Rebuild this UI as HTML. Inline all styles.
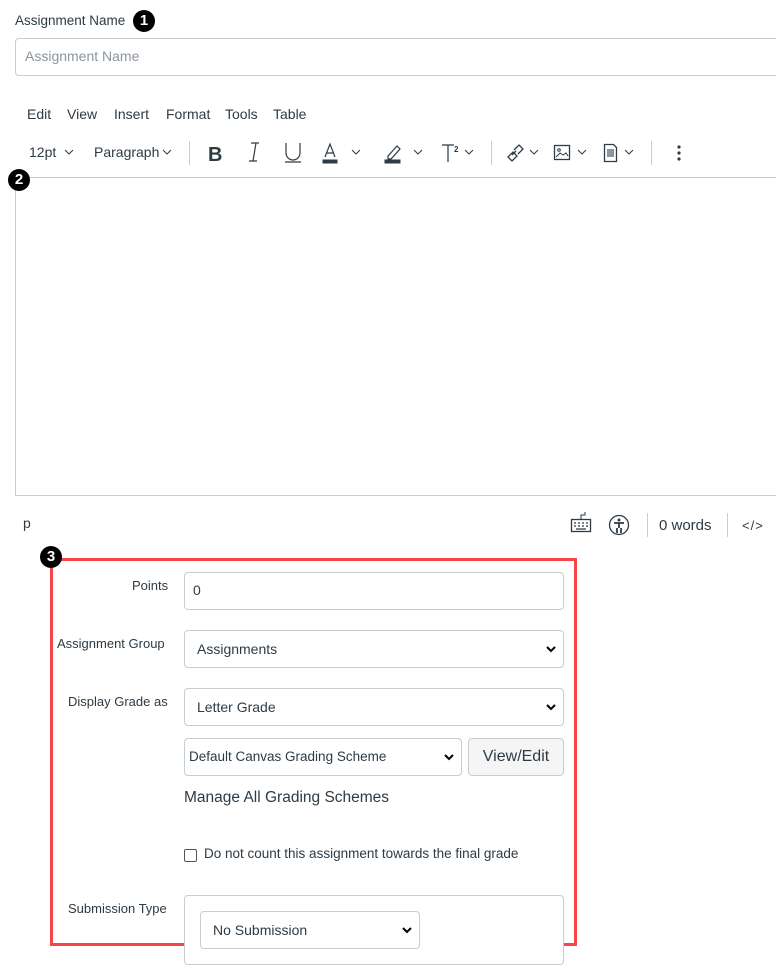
<!DOCTYPE html>
<html><head><meta charset="utf-8"><style>
*{margin:0;padding:0;box-sizing:border-box}
body{width:776px;height:951px;overflow:hidden;background:#fff;font-family:"Liberation Sans",sans-serif;color:#2d3b45;position:relative}
.a{position:absolute}
.t{font-size:14px;color:#2d3b45;white-space:nowrap}
.badge{position:absolute;width:22px;height:22px;border-radius:50%;background:#000;color:#fff;font-weight:bold;font-size:15px;text-align:center;line-height:22px}
.inp{position:absolute;border:1px solid #c7cdd1;border-radius:4px;background:#fff}
.sel{position:absolute;border:1px solid #c7cdd1;border-radius:4px;background:#fff;font-size:14px;padding-left:12px;color:#2d3b45}
.chev{position:absolute;right:7px;top:50%;margin-top:-4px}
</style></head><body>
<div class="a t" style="left:15px;top:13px;font-size:13.5px">Assignment Name</div>
<div class="badge" style="left:133px;top:10px">1</div>
<div class="inp" style="left:15px;top:38px;width:780px;height:38px"></div>
<div class="a t" style="left:25px;top:48px;color:#8b969e">Assignment Name</div>

<div class="a t" style="left:27px;top:106px">Edit</div>
<div class="a t" style="left:67px;top:106px">View</div>
<div class="a t" style="left:114px;top:106px">Insert</div>
<div class="a t" style="left:166px;top:106px">Format</div>
<div class="a t" style="left:225px;top:106px">Tools</div>
<div class="a t" style="left:273px;top:106px">Table</div>

<svg class="a" style="left:0;top:135px" width="776" height="36" viewBox="0 0 776 36" fill="none" stroke="#2d3b45">
<text x="29" y="22" font-family="Liberation Sans" font-size="14" fill="#2d3b45" stroke="none">12pt</text>
<path d="M65 15l4 4 4-4" stroke-width="1"/>
<text x="94" y="22" font-family="Liberation Sans" font-size="14" fill="#2d3b45" stroke="none">Paragraph</text>
<path d="M163 15l4 4 4-4" stroke-width="1"/>
<path d="M189.5 6v24" stroke="#c7cdd1"/>
<text x="208" y="26" font-family="Liberation Sans" font-weight="bold" font-size="20" fill="#2d3b45" stroke="none">B</text>
<path d="M251 8h8M249 26h8M256 8l-3 18" stroke-width="1.2"/>
<path d="M286 8v10a7 7 0 0 0 14 0V8M285 27h16" stroke-width="1.2"/>
<path d="M325 22l5-13 5 13M327 18h7" stroke-width="1.2"/>
<rect x="323" y="25" width="14" height="3" fill="#2d3b45"/>
<path d="M352 15l4 4 4-4" stroke-width="1"/>
<path d="M388 21l9-10 3 3-9 10h-3z" stroke-width="1.2"/>
<rect x="385" y="25" width="15" height="3" fill="#2d3b45"/>
<path d="M414 15l4 4 4-4" stroke-width="1"/>
<path d="M442 10h12M448 10v17" stroke-width="1.2"/>
<text x="454" y="17" font-family="Liberation Sans" font-weight="bold" font-size="8" fill="#2d3b45" stroke="none">2</text>
<path d="M465 15l4 4 4-4" stroke-width="1"/>
<path d="M491.5 6v24" stroke="#c7cdd1"/>
<path d="M508 22l4 4 5-5-4-4zM514 15l5-5 4 4-5 5M512 20l4-4" stroke-width="1.3"/>
<path d="M530 15l4 4 4-4" stroke-width="1"/>
<rect x="554.5" y="10.5" width="15" height="14" stroke-width="1.3"/>
<path d="M556 22l4-4 3 2 3-2 2 3" stroke-width="1"/><circle cx="559" cy="15" r="1.3" stroke-width="1"/>
<path d="M578 15l4 4 4-4" stroke-width="1"/>
<path d="M604.5 9.5h9l3 3v14h-12z" stroke-width="1.3"/><rect x="607" y="14" width="7" height="8" fill="#8b969e" stroke="none"/>
<path d="M625 15l4 4 4-4" stroke-width="1"/>
<path d="M651.5 6v24" stroke="#c7cdd1"/>
<circle cx="679" cy="12" r="1.6" fill="#2d3b45" stroke="none"/><circle cx="679" cy="18" r="1.6" fill="#2d3b45" stroke="none"/><circle cx="679" cy="24" r="1.6" fill="#2d3b45" stroke="none"/>
</svg>

<div class="a" style="left:15px;top:177px;width:790px;height:319px;border:1px solid #c7cdd1;border-right:none"></div>
<div class="badge" style="left:8px;top:169px">2</div>

<div class="a t" style="left:23px;top:515px">p</div>
<svg class="a" style="left:560px;top:510px" width="216" height="30" fill="none" stroke="#2d3b45">
<rect x="11.5" y="9.5" width="19" height="12" stroke-width="1.3"/>
<path d="M21 9V5h4V2" stroke-width="1"/>
<path d="M14 13h2M18 13h2M22 13h2M26 13h2M14 16h2M18 16h2M22 16h2M26 16h2M16 19h10" stroke-width="1.2"/>
<circle cx="59" cy="15" r="9.5" stroke-width="1.3"/>
<circle cx="59" cy="10" r="1.5" fill="#2d3b45" stroke="none"/>
<path d="M54 13h10M59 13v5M57 18v5M61 18v5" stroke-width="1.8"/>
<path d="M87.5 3v24M167.5 3v24" stroke="#c7cdd1"/>
<text x="99" y="20" font-family="Liberation Sans" font-size="15" fill="#2d3b45" stroke="none">0 words</text>
<text x="182" y="20" font-family="Liberation Sans" font-size="13" fill="#2d3b45" stroke="none" letter-spacing="1">&lt;/&gt;</text>
</svg>

<div class="a" style="left:50px;top:558px;width:527px;height:388px;border:3px solid #f5444a"></div>
<div class="badge" style="left:40px;top:546px">3</div>

<div class="a t" style="left:132px;top:578px;font-size:13px">Points</div>
<div class="inp" style="left:184px;top:572px;width:380px;height:38px"></div>
<div class="a t" style="left:193px;top:582px">0</div>

<div class="a t" style="left:57px;top:636px;font-size:13px">Assignment Group</div>
<div class="sel" style="left:184px;top:630px;width:380px;height:38px;line-height:36px">Assignments<svg class="chev" width="10" height="8"><path d="M1 2l4 4 4-4" stroke="#000" stroke-width="2" fill="none"/></svg></div>

<div class="a t" style="left:68px;top:694px;font-size:13px">Display Grade as</div>
<div class="sel" style="left:184px;top:688px;width:380px;height:38px;line-height:36px">Letter Grade<svg class="chev" width="10" height="8"><path d="M1 2l4 4 4-4" stroke="#000" stroke-width="2" fill="none"/></svg></div>

<div class="sel" style="left:184px;top:738px;width:278px;height:38px;line-height:36px;padding-left:4px;font-size:13.5px">Default Canvas Grading Scheme<svg class="chev" width="10" height="8"><path d="M1 2l4 4 4-4" stroke="#000" stroke-width="2" fill="none"/></svg></div>
<div class="a" style="left:468px;top:738px;width:96px;height:38px;border:1px solid #c7cdd1;border-radius:4px;background:#f5f5f5;font-size:16px;text-align:center;line-height:36px;color:#2d3b45">View/Edit</div>
<div class="a t" style="left:184px;top:789px;font-size:15.5px">Manage All Grading Schemes</div>

<div class="a" style="left:184px;top:849px;width:13px;height:13px;border:1px solid #555;border-radius:2px"></div>
<div class="a t" style="left:204px;top:846px;font-size:13.5px">Do not count this assignment towards the final grade</div>

<div class="a t" style="left:68px;top:901px;font-size:13px">Submission Type</div>
<div class="inp" style="left:184px;top:895px;width:380px;height:70px"></div>
<div class="sel" style="left:200px;top:911px;width:220px;height:38px;line-height:36px">No Submission<svg class="chev" width="10" height="8"><path d="M1 2l4 4 4-4" stroke="#000" stroke-width="2" fill="none"/></svg></div>
</body></html>
